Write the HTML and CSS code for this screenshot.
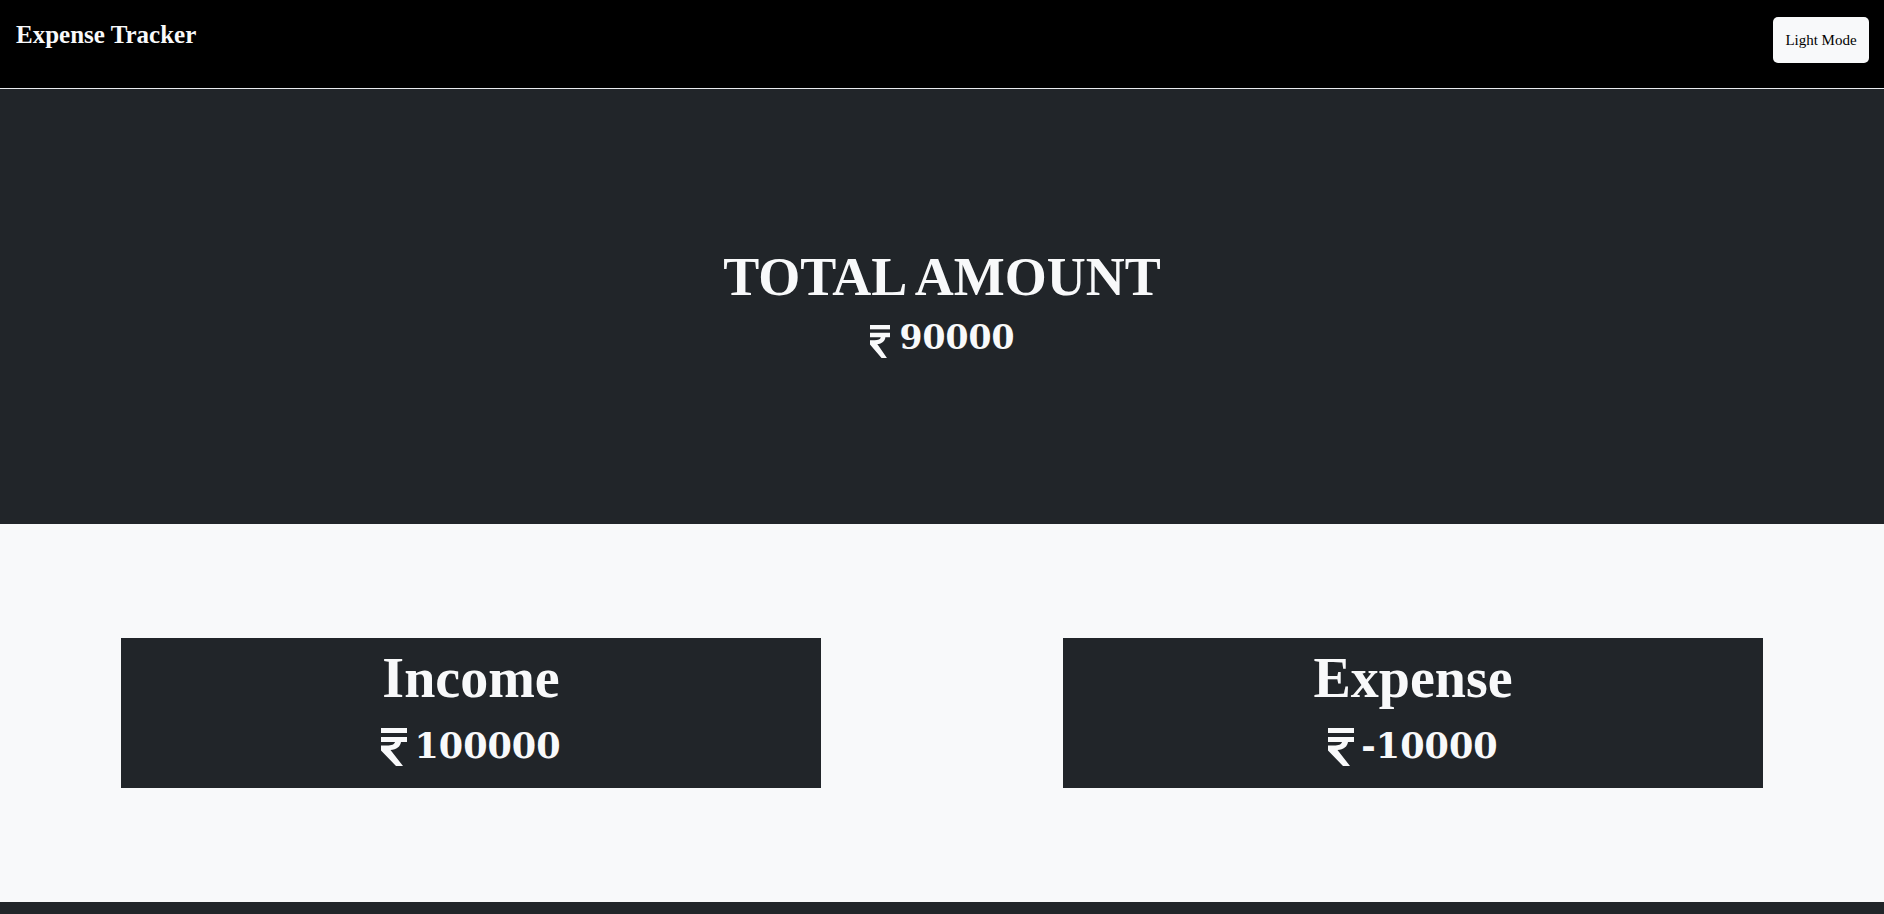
FILE: index.html
```html
<!DOCTYPE html>
<html lang="en">
<head>
<meta charset="utf-8">
<title>Expense Tracker</title>
<link rel="stylesheet" href="styles.css">
</head>
<body>
<nav class="navbar">
  <span class="brand">Expense Tracker</span>
  <button class="mode-btn" type="button">Light Mode</button>
</nav>

<section class="hero">
  <h1 class="hero-title">TOTAL AMOUNT</h1>
  <div class="hero-amount">
    <svg class="rupee rupee-lg" viewBox="0 0 26 38" preserveAspectRatio="none" aria-hidden="true"><rect x="0" y="0" width="26" height="5"/><path d="M0 9 H26 V14 H20 C19.5 18.5 15.5 21.5 9.5 22 L22 38 H15 L0 22.5 V17.5 H6 C10.5 17.5 13.5 16.5 14 14 H0 Z"/></svg><span class="num">90000</span>
  </div>
</section>

<section class="summary">
  <div class="card">
    <h2 class="card-title">Income</h2>
    <div class="card-amount">
      <svg class="rupee rupee-md" viewBox="0 0 26 38" preserveAspectRatio="none" aria-hidden="true"><rect x="0" y="0" width="26" height="5"/><path d="M0 9 H26 V14 H20 C19.5 18.5 15.5 21.5 9.5 22 L22 38 H15 L0 22.5 V17.5 H6 C10.5 17.5 13.5 16.5 14 14 H0 Z"/></svg><span class="num">100000</span>
    </div>
  </div>
  <div class="card">
    <h2 class="card-title">Expense</h2>
    <div class="card-amount">
      <svg class="rupee rupee-md" viewBox="0 0 26 38" preserveAspectRatio="none" aria-hidden="true"><rect x="0" y="0" width="26" height="5"/><path d="M0 9 H26 V14 H20 C19.5 18.5 15.5 21.5 9.5 22 L22 38 H15 L0 22.5 V17.5 H6 C10.5 17.5 13.5 16.5 14 14 H0 Z"/></svg><span class="num">-10000</span>
    </div>
  </div>
</section>

<footer class="footer"></footer>
</body>
</html>
```

FILE: styles.css
```css
* {
  box-sizing: border-box;
}

body {
  margin: 0;
  font-family: "Liberation Serif", "DejaVu Serif", serif;
  background: #212529;
  color: #f8f9fa;
}

.navbar {
  height: 89px;
  background: #000;
  border-bottom: 1px solid #e9ecef;
  display: flex;
  justify-content: space-between;
  align-items: flex-start;
  padding: 17px 15px 0 16px;
}

.brand {
  font-size: 25px;
  font-weight: 700;
  line-height: 28.8px;
  padding-top: 4px;
  color: #f8f9fa;
}

.mode-btn {
  font-family: "Liberation Serif", serif;
  font-size: 15px;
  line-height: 20px;
  color: #000;
  background: #f8f9fa;
  border: none;
  border-radius: 5px;
  width: 96px;
  height: 46px;
  padding: 0;
}

.hero {
  height: 435px;
  background: #212529;
  display: flex;
  flex-direction: column;
  justify-content: center;
  align-items: center;
  padding-bottom: 4px;
}

.hero-title {
  margin: 0;
  font-size: 54px;
  line-height: 60px;
  font-weight: 700;
  color: #f8f9fa;
}

.hero-amount {
  margin-top: 7px;
  line-height: 48px;
  font-family: "DejaVu Serif", serif;
  font-weight: 700;
  font-size: 33px;
}

.rupee {
  fill: #f8f9fa;
}

.rupee-lg {
  width: 20px;
  height: 33px;
  vertical-align: -9px;
  margin-right: 10px;
}

.rupee-md {
  width: 26px;
  height: 38px;
  vertical-align: -8px;
  margin-right: 7px;
}

.summary {
  height: 378px;
  background: #f8f9fa;
  display: grid;
  grid-template-columns: 1fr 1fr;
  align-items: center;
  justify-items: center;
}

.card {
  width: 700px;
  height: 150px;
  background: #212529;
  text-align: center;
  padding-top: 8px;
}

.card-title {
  margin: 0;
  font-size: 56px;
  line-height: 64px;
  font-weight: 700;
  color: #f8f9fa;
}

.card-amount {
  margin-top: 12px;
  line-height: 48px;
  font-family: "DejaVu Serif", serif;
  font-weight: 700;
  font-size: 35px;
}

.footer {
  height: 60px;
  background: #212529;
}
```
